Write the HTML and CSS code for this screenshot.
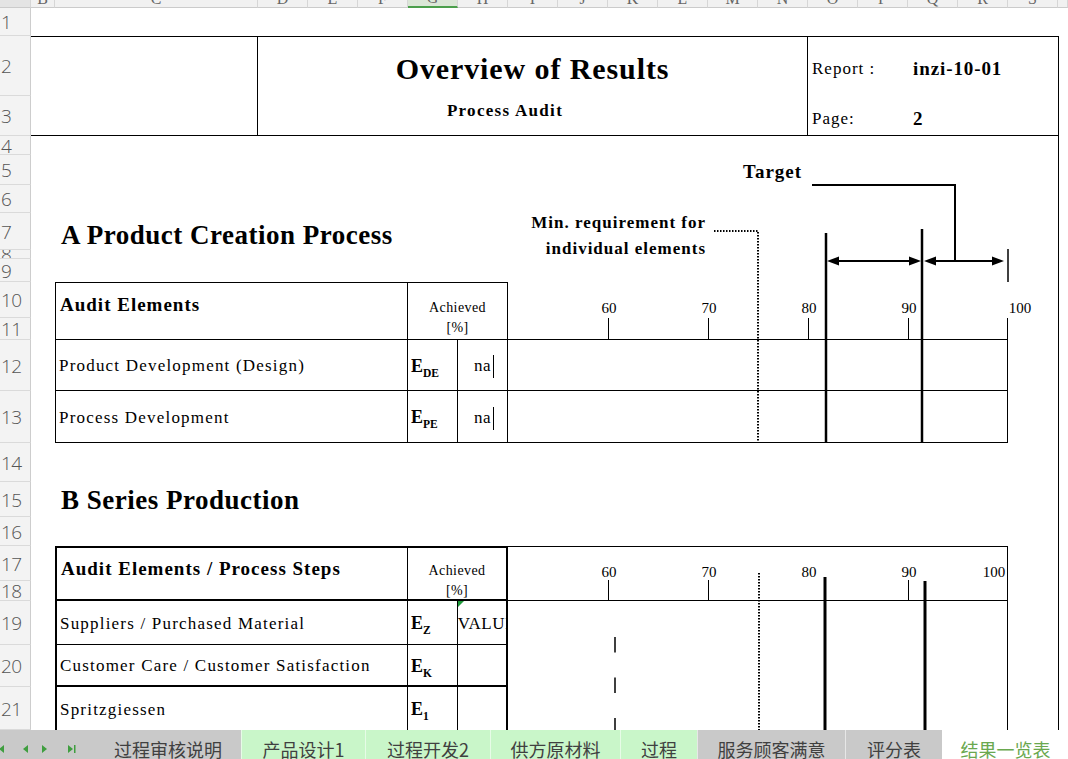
FILE: index.html
```html
<!DOCTYPE html>
<html lang="en">
<head>
<meta charset="utf-8">
<title>Overview of Results – Process Audit</title>
<link rel="stylesheet" href="styles.css">
</head>
<body>
<div class="sheet">
  <!-- column letters -->
  <div class="colhead corner"></div>
  <div class="colhead">B</div>
  <div class="colhead">C</div>
  <div class="colhead">D</div>
  <div class="colhead">E</div>
  <div class="colhead">F</div>
  <div class="colhead is-active">G</div>
  <div class="colhead">H</div>
  <div class="colhead">I</div>
  <div class="colhead">J</div>
  <div class="colhead">K</div>
  <div class="colhead">L</div>
  <div class="colhead">M</div>
  <div class="colhead">N</div>
  <div class="colhead">O</div>
  <div class="colhead">P</div>
  <div class="colhead">Q</div>
  <div class="colhead">R</div>
  <div class="colhead">S</div>
  <div class="colhead"></div>

  <!-- row numbers -->
  <div class="rowhead">1</div>
  <div class="rowhead">2</div>
  <div class="rowhead">3</div>
  <div class="rowhead">4</div>
  <div class="rowhead">5</div>
  <div class="rowhead">6</div>
  <div class="rowhead">7</div>
  <div class="rowhead rowhead--short">8</div>
  <div class="rowhead">9</div>
  <div class="rowhead">10</div>
  <div class="rowhead">11</div>
  <div class="rowhead">12</div>
  <div class="rowhead">13</div>
  <div class="rowhead">14</div>
  <div class="rowhead">15</div>
  <div class="rowhead">16</div>
  <div class="rowhead">17</div>
  <div class="rowhead">18</div>
  <div class="rowhead">19</div>
  <div class="rowhead">20</div>
  <div class="rowhead">21</div>

  <!-- report header -->
  <div class="hdr hdr-left"></div>
  <div class="hdr hdr-mid">
    <div class="doc-title">Overview of Results</div>
    <div class="doc-sub">Process Audit</div>
  </div>
  <div class="hdr hdr-right">
    <span class="meta-label">Report :</span><span class="meta-value">inzi-10-01</span>
    <span class="meta-label meta-low">Page:</span><span class="meta-value meta-low">2</span>
  </div>
  <div class="edge"></div>

  <!-- A: product creation process -->
  <div class="section-title sec-a">A Product Creation Process</div>

  <div class="a-hd-name">Audit Elements</div>
  <div class="a-hd-ach">Achieved<br>[%]</div>
  <div class="a-hd-chart"></div>

  <div class="a-name r12">Product Development (Design)</div>
  <div class="a-el r12"><span class="sym"><b>E</b><sub>DE</sub></span></div>
  <div class="a-val r12">na</div>
  <div class="a-chart r12"></div>

  <div class="a-name r13">Process Development</div>
  <div class="a-el r13"><span class="sym"><b>E</b><sub>PE</sub></span></div>
  <div class="a-val r13">na</div>
  <div class="a-chart r13"></div>

  <!-- B: series production -->
  <div class="section-title sec-b">B Series Production</div>

  <div class="b-hd-name">Audit Elements / Process Steps</div>
  <div class="b-hd-ach">Achieved<br>[%]</div>
  <div class="b-hd-chart"></div>

  <div class="b-name r19 rb-thin">Suppliers / Purchased Material</div>
  <div class="b-el r19 rb-thin"><span class="sym"><b>E</b><sub>Z</sub></span></div>
  <div class="b-val b-val--err r19 rb-thin">#VALUE!</div>
  <div class="b-chart r19"></div>

  <div class="b-name r20 rb-thick">Customer Care / Customer Satisfaction</div>
  <div class="b-el r20 rb-thick"><span class="sym"><b>E</b><sub>K</sub></span></div>
  <div class="b-val r20 rb-thick"></div>
  <div class="b-chart r20"></div>

  <div class="b-name r21">Spritzgiessen</div>
  <div class="b-el r21"><span class="sym"><b>E</b><sub>1</sub></span></div>
  <div class="b-val r21"></div>
  <div class="b-chart r21"></div>

  <!-- chart drawing layer (scale: 60% at x=608, 10% per 100px) -->
  <svg class="drawing" width="1068" height="730" viewBox="0 0 1068 730">
    <g class="callout">
      <text x="743" y="178" class="lbl-bold lbl-target">Target</text>
      <polyline points="812,185 955,185 955,261" fill="none" stroke="#000" stroke-width="2"/>
      <line x1="832" y1="261" x2="917" y2="261" stroke="#000" stroke-width="2"/>
      <polygon points="827,261 839,256.5 839,265.5"/>
      <polygon points="921,261 909,256.5 909,265.5"/>
      <line x1="929" y1="261" x2="999" y2="261" stroke="#000" stroke-width="2"/>
      <polygon points="924,261 936,256.5 936,265.5"/>
      <polygon points="1004,261 992,256.5 992,265.5"/>

      <text x="706" y="228" text-anchor="end" class="lbl-bold lbl-min">Min. requirement for</text>
      <text x="706" y="254" text-anchor="end" class="lbl-bold lbl-min">individual elements</text>
      <path d="M714 231 H758 V443" fill="none" stroke="#000" stroke-width="2" stroke-dasharray="1.5 1.5"/>
    </g>

    <!-- section A scale -->
    <g class="scale" stroke="#000" stroke-width="1">
      <line x1="608.5" y1="318" x2="608.5" y2="340"/>
      <line x1="708.5" y1="318" x2="708.5" y2="340"/>
      <line x1="808.5" y1="318" x2="808.5" y2="340"/>
      <line x1="908.5" y1="318" x2="908.5" y2="340"/>
      <line x1="1007.5" y1="318" x2="1007.5" y2="340"/>
      <line x1="1008" y1="249" x2="1008" y2="282" stroke-width="1.5"/>
    </g>
    <g class="ticks">
      <text x="609" y="313">60</text>
      <text x="709" y="313">70</text>
      <text x="809" y="313">80</text>
      <text x="909" y="313">90</text>
      <text x="1020" y="313">100</text>
    </g>
    <line x1="826" y1="233" x2="826" y2="443" stroke="#000" stroke-width="2.5"/>
    <line x1="922" y1="229" x2="922" y2="443" stroke="#000" stroke-width="2.5"/>
    <line x1="493.5" y1="355" x2="493.5" y2="378" stroke="#000" stroke-width="1"/>
    <line x1="493.5" y1="407" x2="493.5" y2="430" stroke="#000" stroke-width="1"/>

    <!-- section B scale -->
    <g class="scale" stroke="#000" stroke-width="1">
      <line x1="608.5" y1="580" x2="608.5" y2="601"/>
      <line x1="708.5" y1="580" x2="708.5" y2="601"/>
      <line x1="908.5" y1="580" x2="908.5" y2="601"/>
    </g>
    <g class="ticks">
      <text x="609" y="577">60</text>
      <text x="709" y="577">70</text>
      <text x="809" y="577">80</text>
      <text x="909" y="577">90</text>
      <text x="994" y="577">100</text>
    </g>
    <line x1="759" y1="573" x2="759" y2="730" stroke="#000" stroke-width="2" stroke-dasharray="1.5 1.5"/>
    <line x1="825" y1="577" x2="825" y2="730" stroke="#000" stroke-width="3"/>
    <line x1="925" y1="581" x2="925" y2="730" stroke="#000" stroke-width="3"/>
    <line x1="615" y1="637" x2="615" y2="730" stroke="#000" stroke-width="1.5" stroke-dasharray="15.5 25"/>
    <polygon points="458,601 464,601 458,607" fill="#1f9a3a"/>
  </svg>
</div>

<div class="tabbar">
  <div class="tabnav">
    <svg width="95" height="29" viewBox="0 0 95 29">
      <g fill="#3f9e3f">
        <polygon points="4,15 -1,19 4,23"/>
        <polygon points="28,15 23,19 28,23"/>
        <polygon points="42,15 47,19 42,23"/>
        <polygon points="68,15 73,19 68,23"/>
        <rect x="74" y="15" width="1.5" height="8"/>
      </g>
    </svg>
  </div>
  <div class="tab tab--gray tab-w1">过程审核说明</div>
  <div class="tab tab--green tab-w2">产品设计1</div>
  <div class="tab tab--green tab-w3">过程开发2</div>
  <div class="tab tab--green tab-w4">供方原材料</div>
  <div class="tab tab--green tab-w5">过程</div>
  <div class="tab tab--gray tab-w6">服务顾客满意</div>
  <div class="tab tab--gray tab-w7">评分表</div>
  <div class="tab tab--active">结果一览表</div>
</div>
</body>
</html>
```

FILE: styles.css
```css
* { box-sizing: border-box; }

html, body {
  margin: 0;
  padding: 0;
}

body {
  width: 1068px;
  height: 759px;
  overflow: hidden;
  background: #fff;
  color: #000;
  font-family: "Liberation Serif", "Times New Roman", serif;
}

/* worksheet grid: row-number column, columns B..T; header strip, rows 1..21 */
.sheet {
  position: relative;
  display: grid;
  grid-template-columns: 31px 24px 203px repeat(16, 50px) 10px;
  grid-template-rows: 8px 28px 60px 40px 19px 30px 28px 37px 9px 23px 36px 22px 51px 52px 39px 35px 29px 35px 20px 44px 42px 43px;
  height: 730px;
  overflow: hidden;
}

/* column letters */
.colhead {
  grid-row: 1;
  display: flex;
  justify-content: center;
  align-items: flex-end;
  overflow: hidden;
  background: #f1f1f1;
  border-right: 1px solid #d6d6d6;
  border-bottom: 1px solid #cbcbcb;
  font-size: 16px;
  line-height: 16px;
  color: #666;
}
.colhead.corner { background: #e4e4e4; }
.colhead.is-active {
  background: #dbe7d7;
  border-bottom: 2px solid #4b9f4b;
}

/* row numbers */
.rowhead {
  grid-column: 1;
  display: flex;
  align-items: center;
  overflow: hidden;
  padding-left: 1px;
  padding-top: 2px;
  background: #f3f3f3;
  border-right: 1px solid #cdcdcd;
  border-bottom: 1px solid #dadada;
  font-family: "Open Sans", "DejaVu Sans", sans-serif;
  font-weight: 300;
  font-size: 19px;
  letter-spacing: -0.5px;
  line-height: 1;
  color: #555;
}
.rowhead--short {
  padding-top: 0;
  line-height: 8px;
}

/* report header */
.hdr {
  grid-row: 3 / 5;
  border-top: 1px solid #000;
  border-bottom: 1px solid #000;
}
.hdr-left {
  grid-column: 2 / 4;
  border-right: 1px solid #000;
}
.hdr-mid {
  grid-column: 4 / 15;
  border-right: 1px solid #000;
  display: grid;
  grid-template-columns: 500px 1fr;
  grid-template-rows: 59px 39px;
}
.doc-title {
  grid-column: 1 / 3;
  display: flex;
  align-items: center;
  justify-content: center;
  padding-top: 5px;
  font-weight: bold;
  font-size: 30px;
  letter-spacing: 0.9px;
}
.doc-sub {
  grid-column: 1;
  display: flex;
  align-items: flex-start;
  justify-content: center;
  padding: 5px 6px 0 0;
  font-weight: bold;
  font-size: 17px;
  letter-spacing: 1.3px;
}
.hdr-right {
  grid-column: 15 / 20;
  display: grid;
  grid-template-columns: 101px 1fr;
  grid-template-rows: 59px 39px;
  align-items: center;
  padding-left: 4px;
}
.meta-label {
  font-size: 17px;
  letter-spacing: 1px;
  padding-top: 5px;
}
.meta-value {
  font-weight: bold;
  font-size: 19px;
  letter-spacing: 0.9px;
  padding-top: 4px;
}
.meta-low { padding-top: 6px; }

/* right edge of the print area */
.edge {
  grid-column: 20;
  grid-row: 3 / 23;
  border-left: 1px solid #000;
}

/* section headings */
.section-title {
  grid-column: 3 / 12;
  display: flex;
  align-items: center;
  padding-left: 6px;
  font-weight: bold;
  font-size: 27px;
  letter-spacing: 0.5px;
  white-space: nowrap;
}
.sec-a { grid-row: 8; padding-top: 8px; }
.sec-b { grid-row: 16; padding-top: 1px; }

/* row placement */
.r12 { grid-row: 13; }
.r13 { grid-row: 14; }
.r19 { grid-row: 20; }
.r20 { grid-row: 21; }
.r21 { grid-row: 22; }

/* shared cell text */
.a-hd-name, .b-hd-name {
  grid-column: 3 / 7;
  padding: 11px 0 0 4px;
  font-weight: bold;
  font-size: 19px;
  line-height: 22px;
  letter-spacing: 1px;
  white-space: nowrap;
}
.a-hd-ach, .b-hd-ach {
  grid-column: 7 / 9;
  text-align: center;
  font-size: 14px;
  line-height: 20px;
  letter-spacing: 0.4px;
}
.a-hd-chart, .b-hd-chart { grid-column: 9 / 19; }

.a-name, .b-name {
  grid-column: 3 / 7;
  display: flex;
  align-items: center;
  padding: 2px 0 0 3px;
  font-size: 17px;
  letter-spacing: 1.2px;
  white-space: nowrap;
}
.a-el, .b-el {
  grid-column: 7;
  display: flex;
  align-items: center;
  padding: 2px 0 0 3px;
  white-space: nowrap;
}
.sym b {
  font-size: 18px;
}
.sym sub {
  font-size: 11.5px;
  font-weight: bold;
  vertical-align: -5px;
  line-height: 0;
}
.a-val, .b-val {
  grid-column: 8;
  display: flex;
  align-items: center;
  justify-content: center;
  overflow: hidden;
  padding-top: 2px;
  font-size: 17px;
  letter-spacing: 0.6px;
  white-space: nowrap;
}
.b-val--err { padding-left: 7px; }
.a-chart, .b-chart { grid-column: 9 / 19; }

/* table A: thin rules */
.a-hd-name { grid-row: 11 / 13; border: 1px solid #000; }
.a-hd-ach { grid-row: 11 / 13; padding-top: 15px; border-top: 1px solid #000; border-right: 1px solid #000; border-bottom: 1px solid #000; }
.a-hd-chart { grid-row: 11 / 13; border-bottom: 1px solid #000; }
.a-name { border-left: 1px solid #000; border-right: 1px solid #000; border-bottom: 1px solid #000; }
.a-el, .a-val, .a-chart { border-right: 1px solid #000; border-bottom: 1px solid #000; }

/* table B: heavy frame */
.b-hd-name { grid-row: 18 / 20; border-top: 2px solid #000; border-left: 2px solid #000; border-bottom: 2px solid #000; border-right: 1px solid #000; padding-top: 10px; }
.b-hd-ach { grid-row: 18 / 20; padding-top: 13px; border-top: 2px solid #000; border-right: 2px solid #000; border-bottom: 2px solid #000; }
.b-hd-chart { grid-row: 18 / 20; border: 1px solid #000; border-left: 0; }
.b-name { border-left: 2px solid #000; border-right: 1px solid #000; }
.b-el { border-right: 1px solid #000; }
.b-val { border-right: 2px solid #000; }
.b-chart { border-right: 1px solid #000; }
.rb-thin { border-bottom: 1px solid #000; }
.rb-thick { border-bottom: 2px solid #000; }

/* drawing layer on top of the cells */
.drawing {
  position: absolute;
  top: 0;
  left: 0;
  pointer-events: none;
  font-family: "Liberation Serif", "Times New Roman", serif;
}
.lbl-bold { font-weight: bold; }
.lbl-target { font-size: 19px; letter-spacing: 1px; }
.lbl-min { font-size: 17px; letter-spacing: 1px; }
.ticks text {
  font-size: 15px;
  text-anchor: middle;
}

/* sheet tabs */
.tabbar {
  display: flex;
  height: 29px;
  font-family: "Noto Sans CJK SC", "Noto Sans", sans-serif;
  font-size: 18px;
  color: #404040;
}
.tabnav {
  flex: none;
  width: 95px;
  background: #c9c9c9;
}
.tabnav svg { display: block; }
.tab {
  flex: none;
  display: flex;
  align-items: center;
  justify-content: center;
  padding-top: 9px;
  white-space: nowrap;
  overflow: hidden;
  border-left: 1px solid rgba(255, 255, 255, 0.55);
}
.tab--gray { background: #c9c9c9; }
.tab--green { background: #c9f6c9; }
.tab--active {
  flex: 1;
  background: #fff;
  color: #6aa84f;
}
.tab-w1 { width: 146px; border-left: 0; }
.tab-w2 { width: 124px; }
.tab-w3 { width: 125px; }
.tab-w4 { width: 130px; }
.tab-w5 { width: 77px; }
.tab-w6 { width: 148px; }
.tab-w7 { width: 97px; }
```
